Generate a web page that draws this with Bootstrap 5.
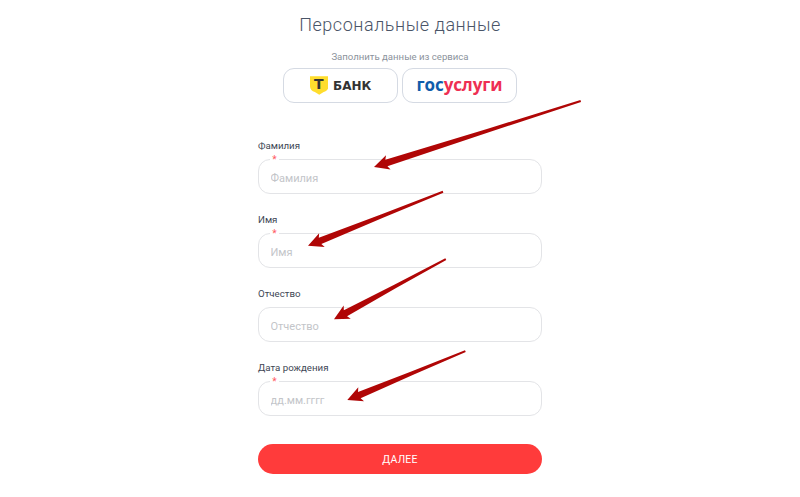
<!DOCTYPE html>
<html lang="ru">
<head>
<meta charset="utf-8">
<title>Персональные данные</title>
<link href="https://cdn.jsdelivr.net/npm/bootstrap@5.3.0/dist/css/bootstrap.min.css" rel="stylesheet">
<style>
html,body{height:497px;overflow:hidden;background:#fff}
body{font-family:Roboto,"Liberation Sans",sans-serif;position:relative}
.pd-wrap{width:284px;padding-top:14px}
.pd-title{font-size:18px;font-weight:300;letter-spacing:.55px;line-height:22px;color:#4a5568;margin:0 0 15px;white-space:nowrap}
.pd-sub{font-size:9.6px;line-height:12px;color:#8b929c;margin:0 0 5px}
.svc-row{gap:4px;margin-bottom:36px}
.svc-btn{width:115px;height:35px;border:1px solid #d5dae3;border-radius:11px;background:#fff;padding:0;color:#333}
.tb-shield{width:18.5px;height:19px;display:block}
.tb-mark{width:18.5px;height:19px;margin-right:5px}
.tb-t{font:700 14px/17px "DejaVu Sans",sans-serif;color:#333;top:0;left:0;width:18.5px}
.tb-word{font:700 12px/1 "DejaVu Sans",sans-serif;color:#333}
.gu-logo{font:700 17px/1 "Open Sans",sans-serif;letter-spacing:-.1px;margin-top:-3px}
.gu-a{color:#0f5cab}.gu-b{color:#ee2f53}
.fld{margin-bottom:19px}
.fld-label{font-size:9.7px;line-height:13px;color:#3d4654;margin:0 0 7px;display:block}
.fld-box{height:35px}
.fld-input.form-control{height:35px;border:1px solid #e3e4e7;border-radius:12px;padding:3px 11.5px 0;font-size:11px;color:#333;box-shadow:none}
.fld-input.form-control::placeholder{color:#c3c5c9;opacity:1}
.fld-star{left:12px;top:-5px;background:#fff;width:9px;height:9px;color:#ff5a5f;font-size:10px;line-height:11px;text-align:center}
.go-btn.btn{height:30px;width:100%;margin-top:9px;border:0;border-radius:15px;background:#ff3b3b;color:#fff;font-size:10.5px;line-height:30px;padding:1px 0 0;letter-spacing:.2px}
.arrows{position:absolute;left:0;top:0;width:800px;height:497px;pointer-events:none}
</style>
</head>
<body>
<main class="pd-wrap mx-auto">
  <h1 class="pd-title text-center">Персональные данные</h1>
  <p class="pd-sub text-center">Заполнить данные из сервиса</p>
  <div class="svc-row d-flex justify-content-center">
    <button type="button" class="svc-btn btn d-flex align-items-center justify-content-center">
      <span class="tb-mark position-relative d-block">
        <svg class="tb-shield" viewBox="0 0 19 19"><path d="M0 0H19V10.2C19 13.5 17 15 14 16.3L9.5 19L5 16.3C2 15 0 13.5 0 10.2Z" fill="#ffdd2d"/></svg>
        <span class="tb-t position-absolute text-center">Т</span>
      </span>
      <span class="tb-word">БАНК</span>
    </button>
    <button type="button" class="svc-btn btn d-flex align-items-center justify-content-center">
      <span class="gu-logo"><span class="gu-a">гос</span><span class="gu-b">услуги</span></span>
    </button>
  </div>
  <form>
    <div class="fld">
      <label class="fld-label" for="f1">Фамилия</label>
      <div class="fld-box position-relative">
        <input id="f1" class="fld-input form-control" placeholder="Фамилия">
        <span class="fld-star position-absolute">*</span>
      </div>
    </div>
    <div class="fld">
      <label class="fld-label" for="f2">Имя</label>
      <div class="fld-box position-relative">
        <input id="f2" class="fld-input form-control" placeholder="Имя">
        <span class="fld-star position-absolute">*</span>
      </div>
    </div>
    <div class="fld">
      <label class="fld-label" for="f3">Отчество</label>
      <div class="fld-box position-relative">
        <input id="f3" class="fld-input form-control" placeholder="Отчество">
      </div>
    </div>
    <div class="fld">
      <label class="fld-label" for="f4">Дата рождения</label>
      <div class="fld-box position-relative">
        <input id="f4" class="fld-input form-control" placeholder="дд.мм.гггг">
        <span class="fld-star position-absolute">*</span>
      </div>
    </div>
    <button type="button" class="go-btn btn">ДАЛЕЕ</button>
  </form>
</main>
<svg class="arrows" viewBox="0 0 800 497" fill="#b00606">
  <polygon transform="translate(374 167) rotate(-17.7)" points="0,0 15,-7.5 13,-3.4 120,-1.9 217,-1 217,1 120,1.9 13,3.4 15,7.5"/>
  <polygon transform="translate(308 245.7) rotate(-21.8)" points="0,0 15,-7.5 13,-3.4 80,-1.9 145.4,-1 145.4,1 80,1.9 13,3.4 15,7.5"/>
  <polygon transform="translate(334 319.3) rotate(-28.3)" points="0,0 15,-7.5 13,-3.4 70,-1.9 127,-1 127,1 70,1.9 13,3.4 15,7.5"/>
  <polygon transform="translate(347.3 400) rotate(-22.5)" points="0,0 15,-7.5 13,-3.4 70,-1.9 127.8,-1 127.8,1 70,1.9 13,3.4 15,7.5"/>
</svg>
<script src="https://cdn.jsdelivr.net/npm/bootstrap@5.3.0/dist/js/bootstrap.bundle.min.js"></script>
</body>
</html>
